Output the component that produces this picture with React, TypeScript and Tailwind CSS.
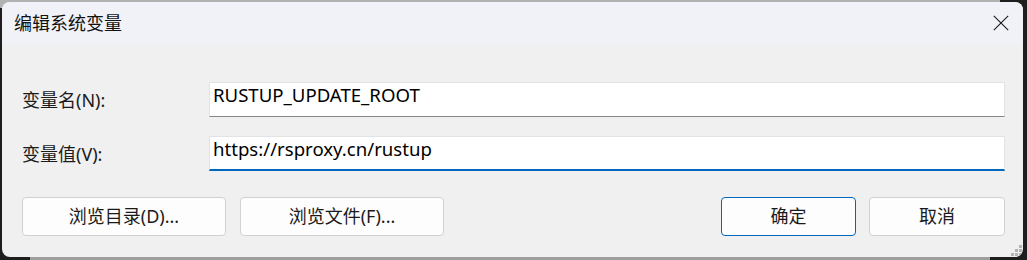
import React from "react";

const font = { fontFamily: '"Noto Sans", "Noto Sans CJK SC", sans-serif' };

function Btn({ label, w, primary }: { label: string; w: string; primary?: boolean }) {
  return (
    <div
      className={`${w} h-[39px] flex items-center justify-center rounded-[4px] bg-[#fdfdfd] border text-[18px] text-[#1a1a1a] ${
        primary ? "border-[#0067c0]" : "border-[#d1d1d1]"
      }`}
    >
      {label}
    </div>
  );
}

export default function App() {
  return (
    <div className="relative w-[1027px] h-[260px] overflow-hidden bg-[#1e1e1e]" style={font}>
      <div className="absolute top-0 left-0 w-[1000px] h-[8px] bg-[#b2b2b2]" />
      <div className="absolute bottom-0 left-[30px] w-[960px] h-[6px] bg-[#9e9e9e]" />
      <div className="relative pl-[2px] pt-[2px]">
        <div className="relative w-[1021px] h-[255px] rounded-[8px] overflow-hidden bg-[#f0f0f0] flex flex-col">
          <div className="h-[42px] bg-[#f1f2f7] flex items-center justify-between pl-[12px] pr-[14px]">
            <span className="text-[18px] text-[#111] leading-none">编辑系统变量</span>
            <svg width="16" height="16" viewBox="0 0 16 16">
              <path d="M0.8 0.8 L15.2 15.2 M15.2 0.8 L0.8 15.2" stroke="#1a1a1a" strokeWidth="1.1" fill="none" />
            </svg>
          </div>
          <div className="flex flex-col pl-[20px] pr-[18px] pt-[38px]">
            <div className="flex items-center">
              <div className="w-[187px] text-[18px] text-[#1a1a1a] leading-none">变量名(N):</div>
              <div className="flex-1 h-[35px] bg-white border border-[#e3e3e3] border-b-[#868686] pl-[3px] text-[18.6px] leading-[24px] text-black">
                RUSTUP_UPDATE_ROOT
              </div>
            </div>
            <div className="flex items-center mt-[19px]">
              <div className="w-[187px] text-[18px] text-[#1a1a1a] leading-none">变量值(V):</div>
              <div className="flex-1 h-[35px] bg-white border border-[#e3e3e3] border-b-2 border-b-[#0067c0] pl-[3px] text-[18.6px] leading-[24px] text-black">
                https://rsproxy.cn/rustup
              </div>
            </div>
            <div className="flex items-center mt-[26px]">
              <Btn label="浏览目录(D)..." w="w-[204px]" />
              <div className="ml-[14px]">
                <Btn label="浏览文件(F)..." w="w-[204px]" />
              </div>
              <div className="flex-1" />
              <Btn label="确定" w="w-[135px]" primary />
              <div className="ml-[13px]">
                <Btn label="取消" w="w-[136px]" />
              </div>
            </div>
          </div>
          <svg width="11" height="11" viewBox="0 0 11 11" className="absolute right-[1px] bottom-[1px]">
            <rect x="8" y="0" width="3" height="3" fill="#b4b4b4" />
            <rect x="4" y="4" width="3" height="3" fill="#b4b4b4" />
            <rect x="8" y="4" width="3" height="3" fill="#b4b4b4" />
            <rect x="0" y="8" width="3" height="3" fill="#b4b4b4" />
            <rect x="4" y="8" width="3" height="3" fill="#b4b4b4" />
            <rect x="8" y="8" width="3" height="3" fill="#b4b4b4" />
          </svg>
        </div>
      </div>
    </div>
  );
}
